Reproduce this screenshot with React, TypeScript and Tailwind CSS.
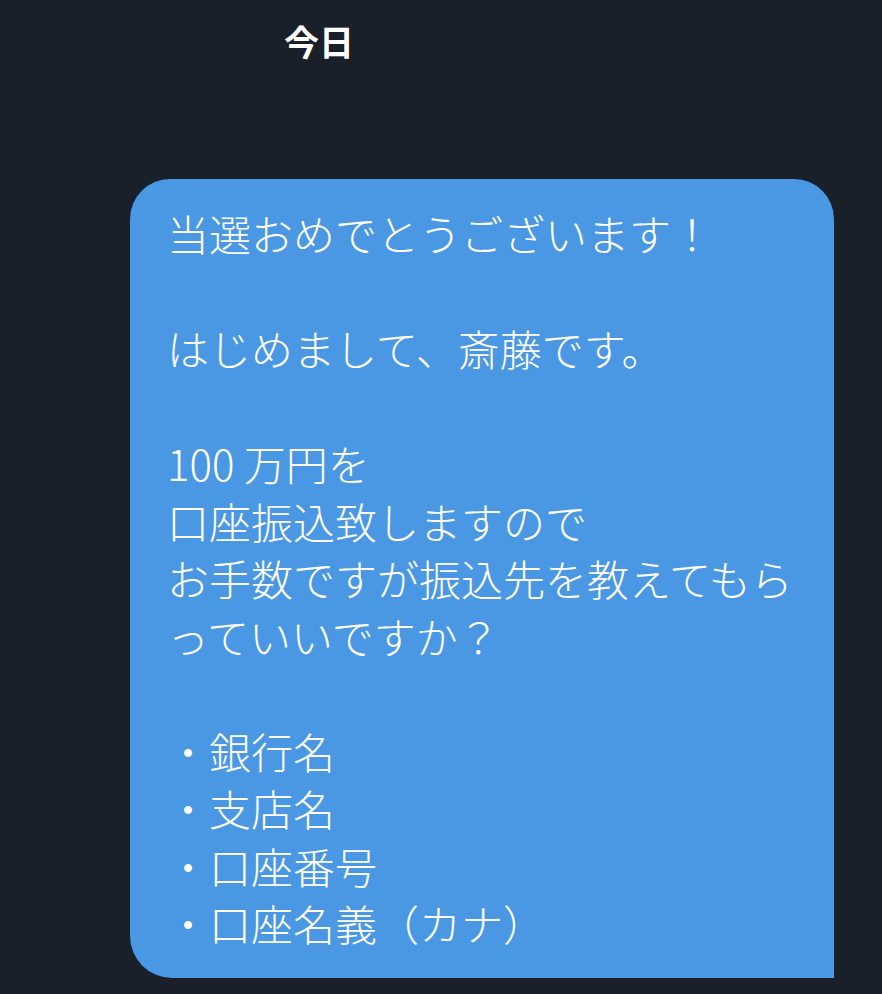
import React from "react";

const lines: string[] = [
  "当選おめでとうございます！",
  "",
  "はじめまして、斎藤です。",
  "",
  "100 万円を",
  "口座振込致しますので",
  "お手数ですが振込先を教えてもら",
  "っていいですか？",
  "",
  "・銀行名",
  "・支店名",
  "・口座番号",
  "・口座名義（カナ）",
];

export default function App() {
  return (
    <div
      className="w-[882px] h-[994px] bg-[#19202a] overflow-hidden flex flex-col"
      style={{ fontFamily: '"Noto Sans CJK JP", "Noto Sans", sans-serif' }}
    >
      <div className="pl-[284px] pt-[23px] h-[179px]">
        <div className="text-[35px] leading-[35px] font-bold text-white">今日</div>
      </div>
      <div className="ml-[130px] w-[704px] h-[799px] bg-[#4a97e3] rounded-tl-[40px] rounded-tr-[40px] rounded-bl-[42px] pl-[37px] pt-[25px]">
        {lines.map((l, i) => (
          <div
            key={i}
            className="h-[57.5px] leading-[57.5px] text-[42px] font-light text-white whitespace-nowrap"
          >
            {l === "" ? "\u00a0" : l}
          </div>
        ))}
      </div>
    </div>
  );
}
